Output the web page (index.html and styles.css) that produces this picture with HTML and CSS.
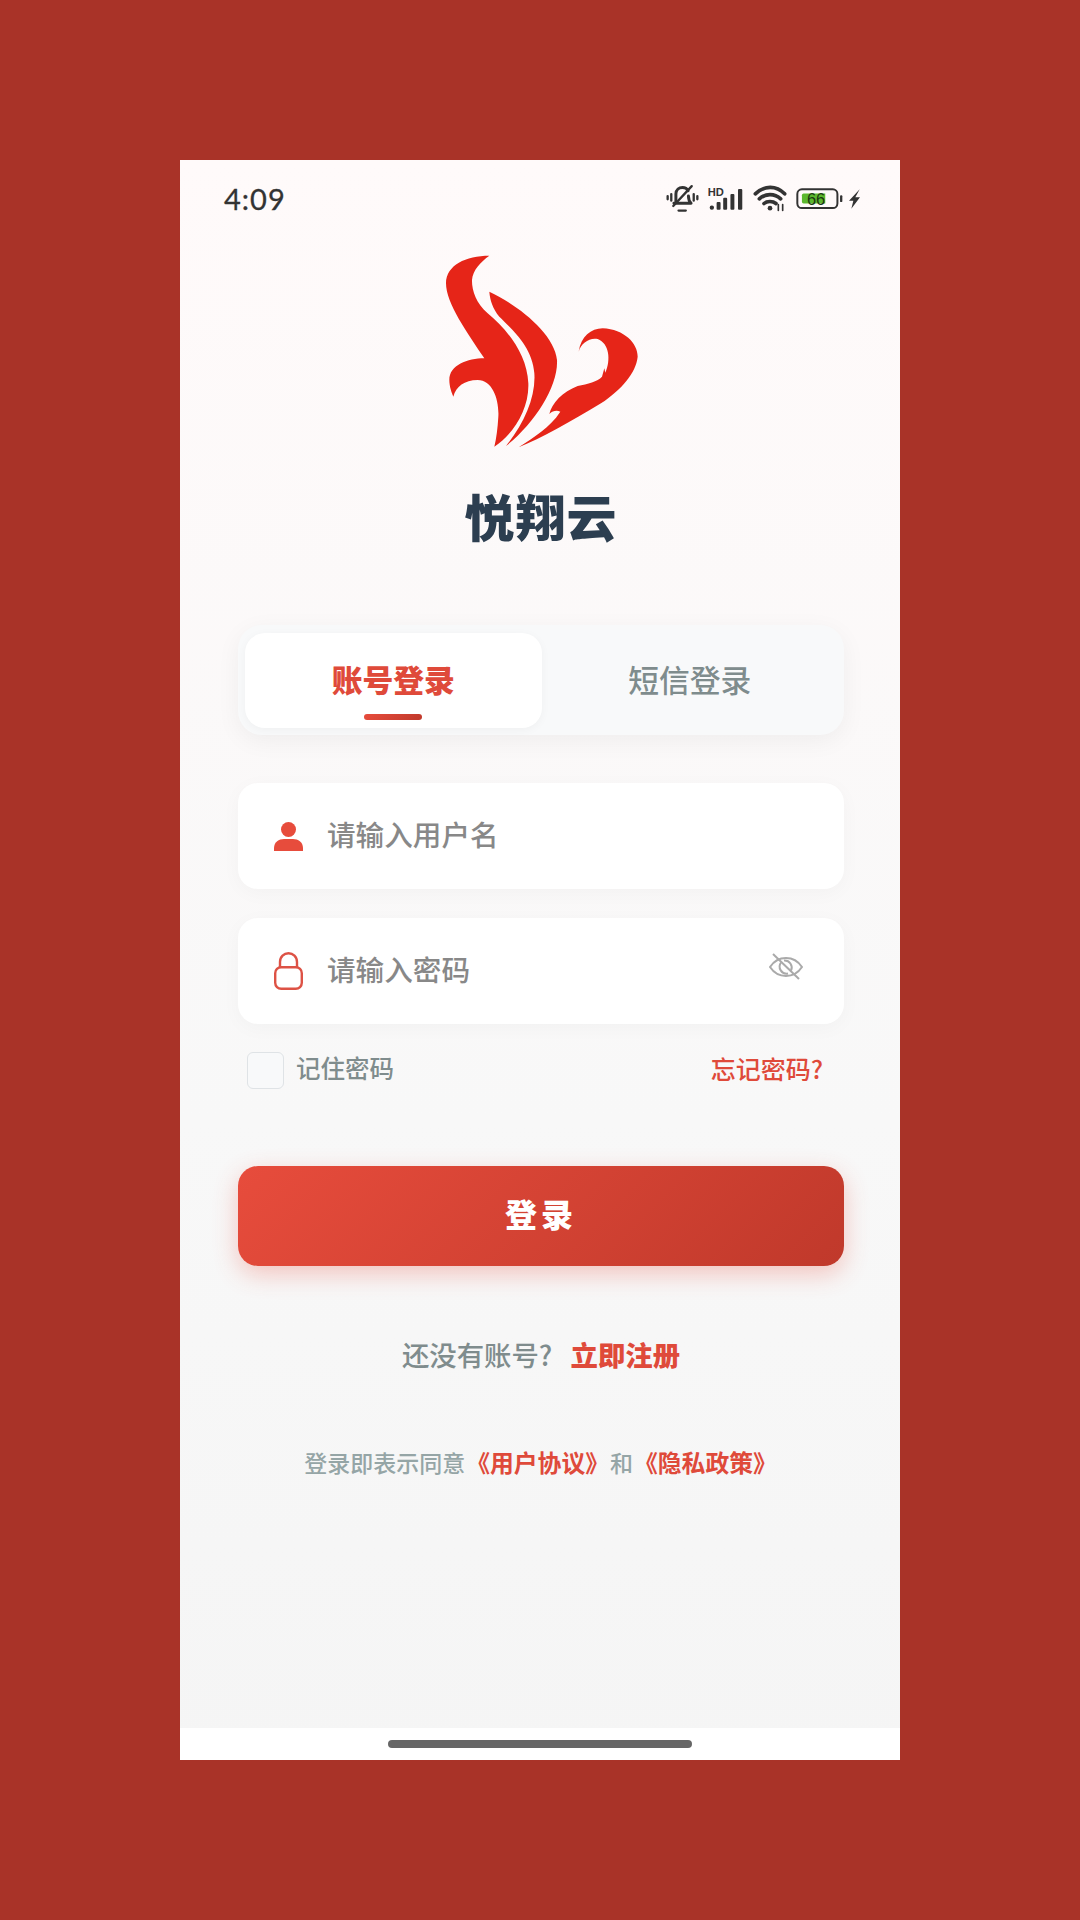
FILE: index.html
```html
<!DOCTYPE html>
<html lang="zh-CN">
<head>
  <meta charset="UTF-8">
  <meta name="viewport" content="width=device-width, initial-scale=1.0">
  <title>悦翔云</title>
  <link rel="stylesheet" href="styles.css">
</head>
<body>
  <div class="phone">
    <div class="screen">
      <!-- status bar -->
      <div class="status-bar">
        <span class="status-time">4:09</span>
        <div class="status-icons">
          <svg class="icon-bell" viewBox="18 42 100 90" fill="none" stroke="#333" stroke-width="9" stroke-linecap="round" stroke-linejoin="round">
            <path d="M48 98 V72 C48 58 58 52 68 52 C76 52 82 56 85 62"/>
            <path d="M42 100 H94 C88 94 86 88 86 78"/>
            <path d="M40 108 L96 48" stroke-width="7"/>
            <path d="M56 122 H78" stroke-width="7"/>
            <path d="M34 72 V92 M23 78 V88 M102 72 V92 M113 78 V88" stroke-width="7"/>
          </svg>
          <svg class="icon-signal" viewBox="140 46 110 76" fill="#333">
            <text x="141" y="75" class="signal-hd">HD</text>
            <rect x="147" y="105" width="13" height="13" rx="6"/>
            <rect x="168" y="95" width="12" height="23" rx="3"/>
            <rect x="188" y="82" width="12" height="36" rx="3"/>
            <rect x="210" y="70" width="12" height="48" rx="3"/>
            <rect x="233" y="55" width="13" height="63" rx="3"/>
          </svg>
          <svg class="icon-wifi" viewBox="274 46 102 80" fill="none" stroke="#333" stroke-width="11" stroke-linecap="round">
            <path d="M281 72 C308 46 344 46 369 72"/>
            <path d="M293 87 C311 70 339 70 357 87"/>
            <path d="M307 101 C316 93 333 93 343 101"/>
            <circle cx="325" cy="115" r="7" fill="#333" stroke="none"/>
            <path d="M350 104 V122 M363 104 V122" stroke-width="5"/>
          </svg>
          <svg class="icon-battery" viewBox="404 50 150 70">
            <rect x="410" y="57" width="122" height="57" rx="14" fill="none" stroke="#333" stroke-width="6"/>
            <path d="M429 70 H495 V100 H429 Q424 100 424 95 V75 Q424 70 429 70Z" fill="#5cb82e"/>
            <rect x="540" y="75" width="7" height="21" rx="3" fill="#333"/>
            <text x="467" y="104" class="battery-level">66</text>
          </svg>
          <svg class="icon-bolt" viewBox="560 54 40 66" fill="#333">
            <path d="M597 58 L565 92 H578 L572 116 L598 82 H584Z"/>
          </svg>
        </div>
      </div>

      <div class="content">
        <svg class="logo" viewBox="0 0 720 660" fill="#e62518">
          <path d="M205 47 C135 47 75 75 75 130 C75 190 140 280 190 355 C140 355 85 375 85 420 C85 440 92 458 97 470 C105 440 130 420 170 420 C215 420 235 480 232 530 C230 565 226 595 220 620 C275 585 325 510 322 430 C318 340 255 265 200 220 C165 190 152 150 153 120 C155 90 180 65 205 47Z"/>
          <path d="M205 155 C290 195 400 280 408 360 C412 440 340 550 255 618 C310 550 345 470 340 400 C335 320 270 265 235 230 C215 205 207 180 205 155Z"/>
          <path d="M293 622 C340 590 385 565 418 515 C408 510 395 512 385 522 C392 490 425 455 470 438 C500 432 530 425 543 410 L550 385 L553 398 C570 360 565 310 530 297 C505 292 480 310 473 335 C480 290 510 265 545 265 C610 268 650 310 650 350 C645 400 600 450 540 490 C450 545 360 595 293 622Z"/>
        </svg>
        <h1 class="app-name">悦翔云</h1>

        <div class="tabs">
          <div class="tab tab-active">账号登录</div>
          <div class="tab">短信登录</div>
        </div>

        <div class="field field-user">
          <svg class="field-icon" viewBox="0 0 29 29" fill="#e74c3c">
            <circle cx="14.5" cy="7.5" r="7.5"/>
            <path d="M0 26 C0 20 5 17 10 17 H19 C24 17 29 20 29 26 V29 H0Z"/>
          </svg>
          <span class="placeholder">请输入用户名</span>
        </div>

        <div class="field field-pass">
          <svg class="field-icon icon-lock" viewBox="0 0 29 38" fill="none" stroke="#dd5245" stroke-width="2.4">
            <rect x="1.2" y="15.2" width="26.6" height="21.6" rx="6"/>
            <path d="M6 15 V10 C6 4.5 10 1.2 14.5 1.2 C19 1.2 23 4.5 23 10 V15"/>
          </svg>
          <span class="placeholder">请输入密码</span>
          <svg class="icon-eye" viewBox="0 0 34 27" fill="none" stroke="#aaa" stroke-width="2">
            <path d="M1 14 C5 8 11 5 17 5 C23 5 29 8 33 14 C29 20 23 23 17 23 C11 23 5 20 1 14Z"/>
            <path d="M12 9.5 A7 7 0 0 0 19 20.5 M22 17.5 A7 7 0 0 0 15 7.5"/>
            <path d="M4 1 L30 26"/>
          </svg>
        </div>

        <div class="options">
          <label class="remember"><span class="checkbox"></span><span class="remember-text">记住密码</span></label>
          <a class="forgot">忘记密码?</a>
        </div>

        <button class="btn-login">登录</button>

        <p class="signup">还没有账号? <a class="signup-link">立即注册</a></p>
        <p class="legal">登录即表示同意<a class="legal-link">《用户协议》</a>和<a class="legal-link">《隐私政策》</a></p>
      </div>

      <div class="gesture-bar"><span class="gesture-pill"></span></div>
    </div>
  </div>
</body>
</html>
```

FILE: styles.css
```css
* {
  box-sizing: border-box;
}
body {
  margin: 0;
  min-height: 1920px;
  background-color: #a93328;
  font-family: "Noto Sans CJK SC", "Noto Sans", sans-serif;
  display: flex;
  justify-content: center;
  padding-top: 160px;
}
p, h1 {
  margin: 0;
}
.phone {
  width: 720px;
  height: 1600px;
  background-color: white;
}
.screen {
  height: 100%;
  display: flex;
  flex-direction: column;
  background: linear-gradient(180deg, #fffafa 0%, #f8f8f8 60%, #f5f5f5 100%);
}
.status-bar {
  height: 80px;
  flex-shrink: 0;
  display: flex;
  align-items: center;
  justify-content: space-between;
  padding: 0 39px 3px 44px;
}
.status-time {
  font-family: "Lato", sans-serif;
  font-size: 29px;
  letter-spacing: 1px;
  color: #333;
  -webkit-text-stroke: 0.3px #333;
}
.status-icons {
  display: flex;
  align-items: center;
  gap: 2px;
}
.icon-bell {
  width: 33px;
  height: 30px;
}
.icon-signal {
  width: 37px;
  height: 25px;
  margin-left: 6px;
}
.icon-wifi {
  width: 34px;
  height: 27px;
  margin-left: 7px;
}
.icon-battery {
  width: 50px;
  height: 23px;
  margin-left: 6px;
}
.icon-bolt {
  width: 14px;
  height: 22px;
}
.signal-hd {
  font-family: "Liberation Sans", sans-serif;
  font-size: 34px;
  font-weight: 700;
}
.battery-level {
  font-family: "Liberation Sans", sans-serif;
  font-size: 50px;
  fill: #1c3a10;
  text-anchor: middle;
}
.content {
  flex: 1;
  display: flex;
  flex-direction: column;
  align-items: center;
  padding: 0 56px 0 58px;
}
.logo {
  width: 240px;
  height: 220px;
  flex-shrink: 0;
}
.app-name {
  margin-top: 25px;
  font-size: 50px;
  line-height: 60px;
  font-weight: 900;
  letter-spacing: 1px;
  color: #2c3e50;
}
.tabs {
  width: 100%;
  height: 110px;
  margin-top: 80px;
  padding: 8px 6px 7px 7px;
  display: flex;
  background-color: #f8f9fa;
  border-radius: 24px;
  box-shadow: 0 6px 24px rgba(0, 0, 0, 0.05);
}
.tab {
  flex: 1;
  position: relative;
  display: flex;
  align-items: center;
  justify-content: center;
  padding-bottom: 5px;
  font-size: 30.8px;
  font-weight: 500;
  color: #7f8c8d;
  border-radius: 20px;
}
.tab-active {
  background-color: white;
  color: #df4a3a;
  font-weight: 900;
  box-shadow: 0 2px 10px rgba(0, 0, 0, 0.04);
}
.tab-active::after {
  content: "";
  position: absolute;
  left: 50%;
  bottom: 8px;
  width: 58px;
  height: 6px;
  margin-left: -29px;
  border-radius: 3px;
  background: linear-gradient(135deg, #e74c3c, #c0392b);
}
.field {
  width: 100%;
  height: 106px;
  display: flex;
  align-items: center;
  padding: 0 36px;
  background-color: white;
  border-radius: 20px;
  box-shadow: 0 4px 20px rgba(0, 0, 0, 0.03);
}
.field-user {
  margin-top: 48px;
}
.field-pass {
  margin-top: 29px;
}
.field-icon {
  width: 29px;
  height: 29px;
  flex-shrink: 0;
}
.icon-lock {
  height: 38px;
}
.placeholder {
  margin-left: 24px;
  margin-bottom: 5px;
  font-size: 28.6px;
  font-weight: 500;
  color: #888;
}
.icon-eye {
  width: 34px;
  height: 27px;
  margin-left: auto;
  margin-right: 5px;
  margin-bottom: 10px;
}
.options {
  width: 100%;
  height: 37px;
  margin-top: 28px;
  padding: 0 21px 0 9px;
  display: flex;
  align-items: center;
  justify-content: space-between;
}
.remember {
  display: flex;
  align-items: center;
  gap: 12px;
  font-size: 24.5px;
  font-weight: 500;
  color: #7f8c8d;
}
.remember-text {
  margin-bottom: 5px;
  line-height: 1;
}
.checkbox {
  width: 37px;
  height: 37px;
  border: 1px solid #dfe3e6;
  border-radius: 6px;
  background-color: #f8f9fa;
}
.forgot {
  margin-bottom: 5px;
  line-height: 1;
  font-size: 25px;
  font-weight: 500;
  color: #df4a3a;
}
.btn-login {
  width: 100%;
  height: 100px;
  margin-top: 77px;
  padding: 0 0 6px;
  border: none;
  border-radius: 20px;
  font-family: inherit;
  font-size: 32px;
  font-weight: 900;
  letter-spacing: 4px;
  color: white;
  background: linear-gradient(135deg, #e74c3c, #c0392b);
  box-shadow: 0 8px 24px rgba(231, 76, 60, 0.3);
}
.signup {
  margin-top: 68px;
  font-size: 27.4px;
  line-height: 40px;
  font-weight: 500;
  color: #7f8c8d;
}
.signup-link {
  margin-left: 12px;
  font-weight: 900;
  color: #df4a3a;
}
.legal {
  margin-top: 71px;
  font-size: 23px;
  line-height: 34px;
  font-weight: 500;
  color: #95a5a6;
}
.legal-link {
  margin: 0 1px;
  font-size: 23.8px;
  font-weight: 700;
  color: #df4a3a;
}
.gesture-bar {
  height: 32px;
  flex-shrink: 0;
  display: flex;
  justify-content: center;
  padding-top: 12px;
  background-color: white;
}
.gesture-pill {
  width: 304px;
  height: 8px;
  border-radius: 4px;
  background-color: #666;
}
```
